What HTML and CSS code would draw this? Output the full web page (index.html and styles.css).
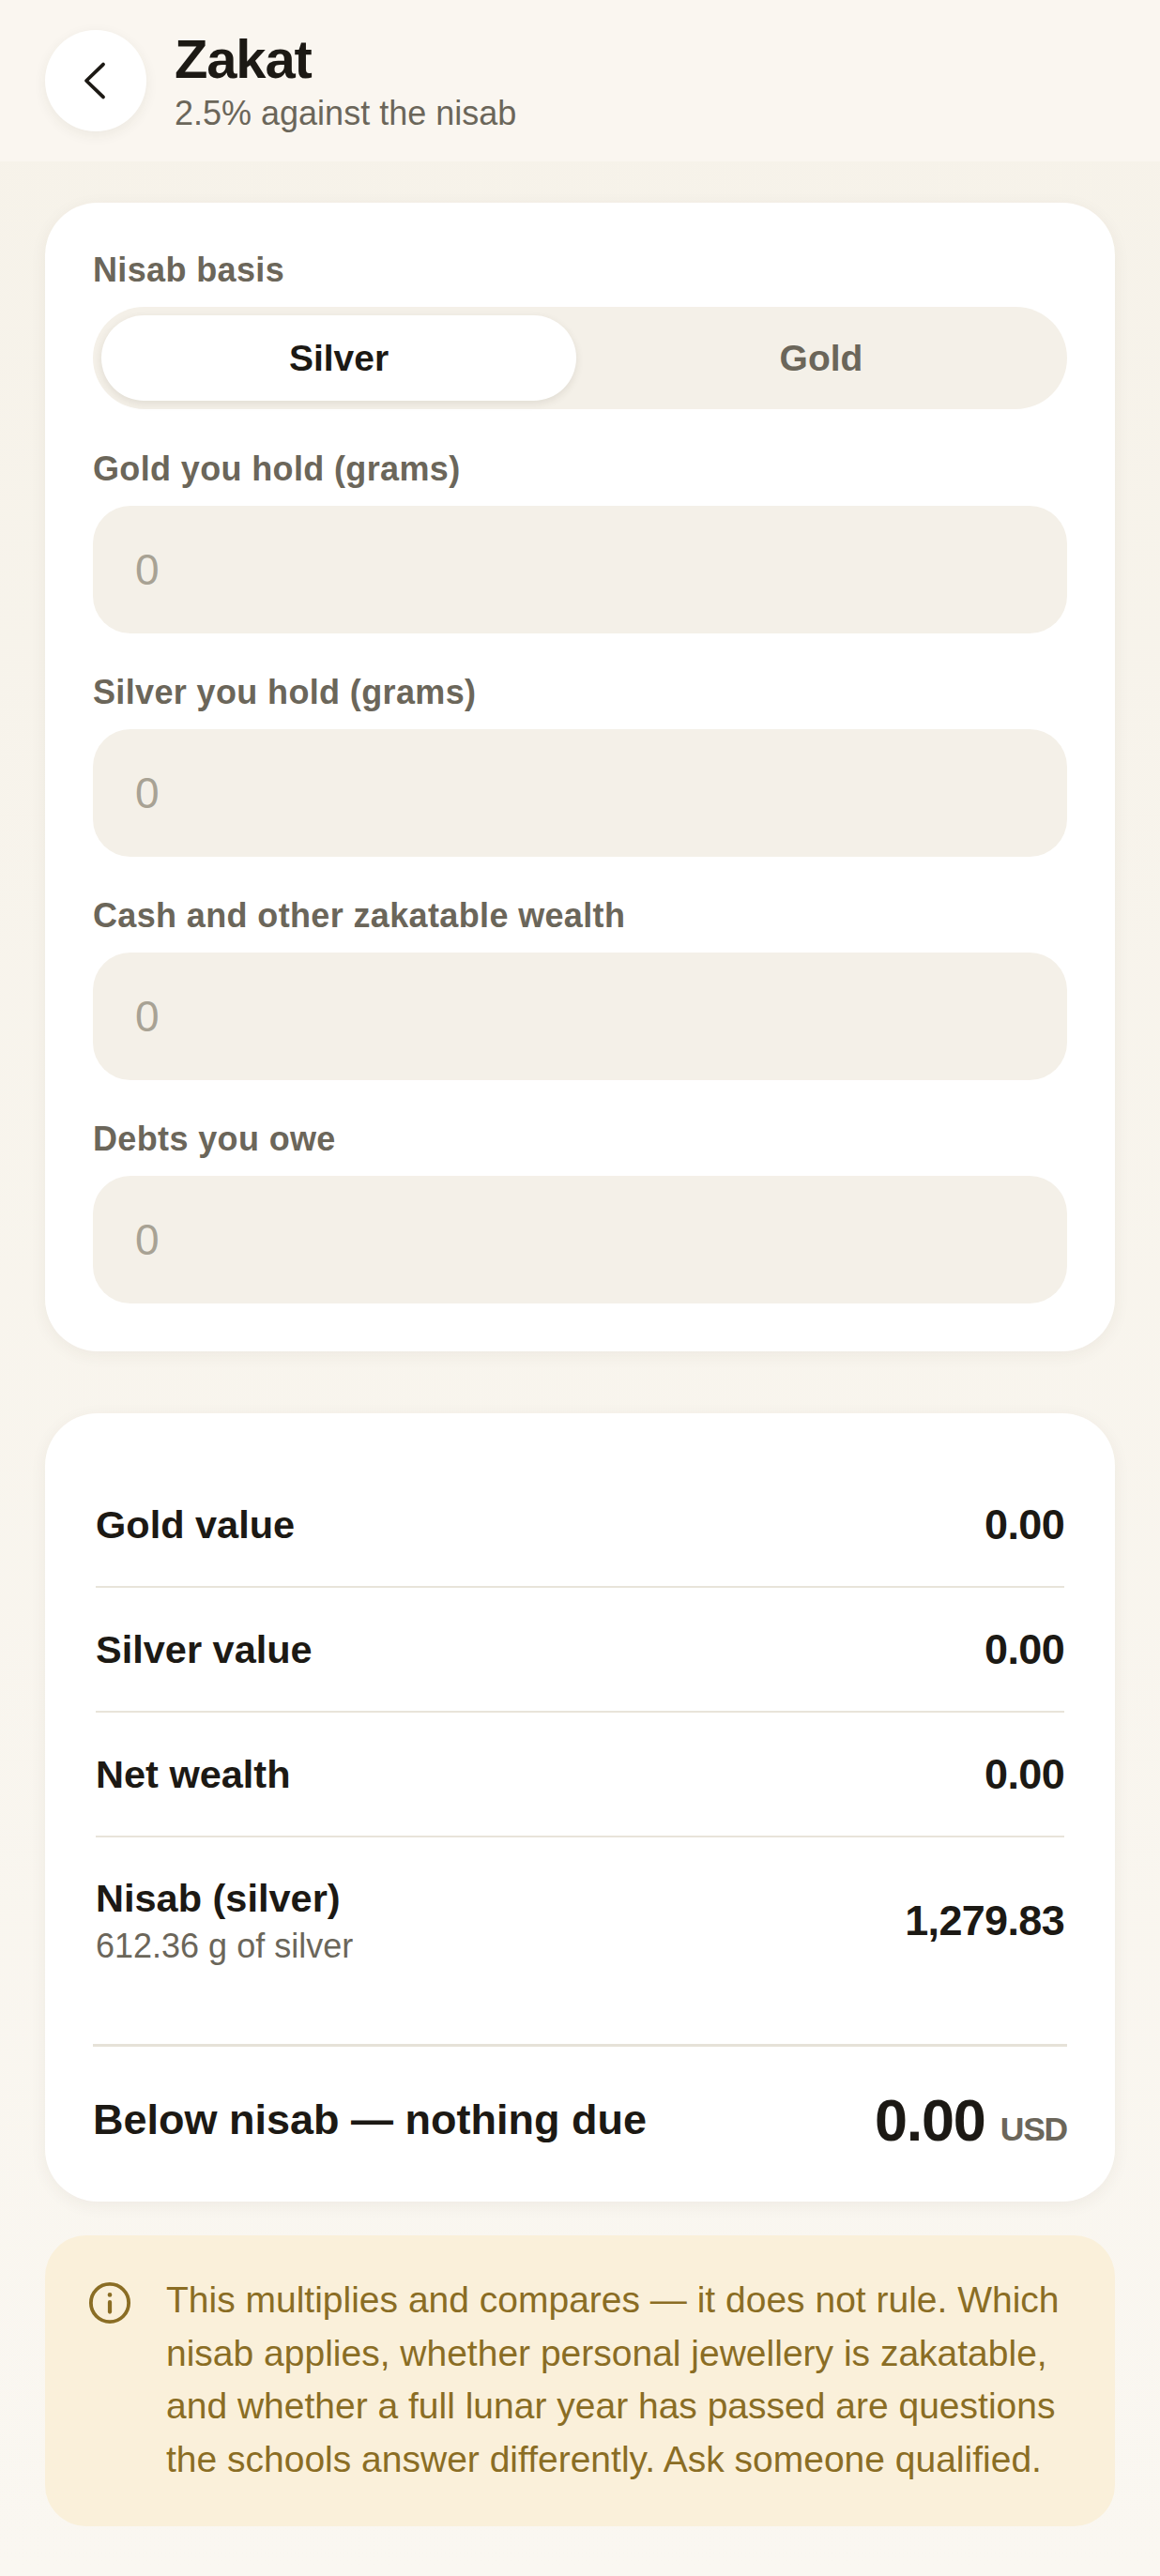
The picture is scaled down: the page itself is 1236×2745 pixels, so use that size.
FILE: index.html
```html
<!DOCTYPE html>
<html lang="en">

<head>
    <meta charset="UTF-8">
    <meta name="viewport" content="width=device-width, initial-scale=1.0">
    <title>Zakat</title>
    <link rel="stylesheet" href="styles.css">
</head>

<body>
    <header class="topbar">
        <button class="back" type="button" aria-label="Back">
            <svg viewBox="0 0 24 24" width="48" height="48" fill="none" stroke="#1c1914" stroke-width="1.9" stroke-linecap="round" stroke-linejoin="round">
                <path d="M16 3.3 L7 12 L16 20.7"/>
            </svg>
        </button>
        <div class="heading">
            <h1>Zakat</h1>
            <p>2.5% against the nisab</p>
        </div>
    </header>

    <main class="content">
        <section class="card form">
            <div class="field basis">
                <span class="label">Nisab basis</span>
                <div class="toggle">
                    <button class="toggle-btn active" type="button">Silver</button>
                    <button class="toggle-btn" type="button">Gold</button>
                </div>
            </div>
            <label class="field">
                <span class="label">Gold you hold (grams)</span>
                <input class="amount" type="text" placeholder="0">
            </label>
            <label class="field">
                <span class="label">Silver you hold (grams)</span>
                <input class="amount" type="text" placeholder="0">
            </label>
            <label class="field">
                <span class="label">Cash and other zakatable wealth</span>
                <input class="amount" type="text" placeholder="0">
            </label>
            <label class="field">
                <span class="label">Debts you owe</span>
                <input class="amount" type="text" placeholder="0">
            </label>
        </section>

        <section class="card result">
            <div class="rows">
                <div class="row"><span class="row-name">Gold value</span><span class="row-value">0.00</span></div>
                <div class="row"><span class="row-name">Silver value</span><span class="row-value">0.00</span></div>
                <div class="row"><span class="row-name">Net wealth</span><span class="row-value">0.00</span></div>
                <div class="row tall">
                    <div>
                        <span class="row-name">Nisab (silver)</span>
                        <span class="row-sub">612.36 g of silver</span>
                    </div>
                    <span class="row-value">1,279.83</span>
                </div>
            </div>
            <div class="total">
                <span class="total-name">Below nisab — nothing due</span>
                <span class="total-value">0.00 <small>USD</small></span>
            </div>
        </section>

        <aside class="note">
            <svg class="note-icon" viewBox="0 0 24 24" width="46" height="46" fill="none" stroke="#8a6d24" stroke-width="2" stroke-linecap="round">
                <circle cx="12" cy="12" r="10.5"/>
                <path d="M12 11.5 V17" stroke-width="2.2"/>
                <path d="M12 7.4 V7.5" stroke-width="2.4"/>
            </svg>
            <p>This multiplies and compares — it does not rule. Which nisab applies, whether personal jewellery is zakatable, and whether a full lunar year has passed are questions the schools answer differently. Ask someone qualified.</p>
        </aside>
    </main>
</body>

</html>
```

FILE: styles.css
```css
* {
    box-sizing: border-box;
}

body {
    margin: 0;
    min-height: 2745px;
    font-family: "Liberation Sans", Arial, sans-serif;
    color: #1c1914;
    background: linear-gradient(180deg, #f6f2e9 0%, #faf7f1 100%);
}

/* header */
.topbar {
    display: flex;
    gap: 30px;
    height: 172px;
    padding: 32px 48px 0;
    background: #faf6f0;
}

.back {
    display: flex;
    align-items: center;
    justify-content: center;
    flex: none;
    width: 108px;
    height: 108px;
    padding: 0;
    border: 0;
    border-radius: 50%;
    background: #fff;
    box-shadow: 0 4px 14px rgba(60, 50, 30, 0.07);
}

.heading h1 {
    margin: 0;
    font-size: 58px;
    line-height: 62px;
    letter-spacing: -0.02em;
    font-weight: 700;
}

.heading p {
    margin: 4px 0 0;
    font-size: 36px;
    line-height: 46px;
    color: #6b665a;
}

/* main column */
.content {
    display: flex;
    flex-direction: column;
    padding: 44px 48px 0;
}

.card {
    border-radius: 56px;
    background: #fff;
    box-shadow: 0 4px 18px rgba(60, 50, 30, 0.06);
}

.form {
    display: flex;
    flex-direction: column;
    gap: 41px;
    height: 1224px;
    padding: 50px 51px 0;
}

.field {
    display: block;
}

.basis {
    margin-bottom: 1px;
}

.label {
    display: block;
    margin-bottom: 17px;
    font-size: 36px;
    line-height: 44px;
    font-weight: 700;
    letter-spacing: 0.01em;
    color: #6b665a;
}

.toggle {
    display: flex;
    gap: 8px;
    height: 109px;
    padding: 9px;
    border-radius: 55px;
    background: #f4f0e8;
}

.toggle-btn {
    flex: 1;
    padding: 0;
    border: 0;
    border-radius: 46px;
    font: 700 39px "Liberation Sans", Arial, sans-serif;
    color: #6b665a;
    background: transparent;
}

.toggle-btn.active {
    color: #1c1914;
    background: #fff;
    box-shadow: 0 3px 8px rgba(60, 50, 30, 0.1);
}

.amount {
    display: block;
    width: 100%;
    height: 136px;
    padding: 0 45px;
    border: 0;
    border-radius: 40px;
    font: 400 46px "Liberation Sans", Arial, sans-serif;
    background: #f4f0e8;
}

.amount::placeholder {
    color: #a8a294;
    opacity: 1;
}

/* results */
.result {
    margin-top: 66px;
    height: 840px;
    padding: 53px 51px 0;
}

.rows {
    padding: 0 3px;
}

.row {
    display: flex;
    align-items: center;
    justify-content: space-between;
    height: 133px;
    border-bottom: 2px solid #e8e4da;
}

.row.tall {
    height: 178px;
    border-bottom: 0;
}

.row-name {
    display: block;
    font-size: 41.5px;
    line-height: 50px;
    font-weight: 700;
}

.row-sub {
    display: block;
    margin-top: 4px;
    font-size: 36px;
    line-height: 44px;
    color: #6b665a;
}

.row-value {
    font-size: 45px;
    font-weight: 700;
    letter-spacing: -0.015em;
}

.total {
    display: flex;
    align-items: center;
    justify-content: space-between;
    height: 158px;
    margin-top: 42px;
    border-top: 3px solid #e6e2d8;
}

.total-name {
    font-size: 45px;
    font-weight: 700;
}

.total-value {
    font-size: 63px;
    font-weight: 700;
    letter-spacing: -0.02em;
}

.total-value small {
    font-size: 35.5px;
    color: #6b665a;
}

/* note */
.note {
    display: flex;
    gap: 37px;
    height: 310px;
    margin-top: 36px;
    padding: 41px 40px 0 46px;
    border-radius: 44px;
    color: #8a6d24;
    background: #faf0da;
}

.note-icon {
    flex: none;
    margin-top: 8px;
}

.note p {
    margin: 0;
    font-size: 39px;
    line-height: 56.6px;
}
```
